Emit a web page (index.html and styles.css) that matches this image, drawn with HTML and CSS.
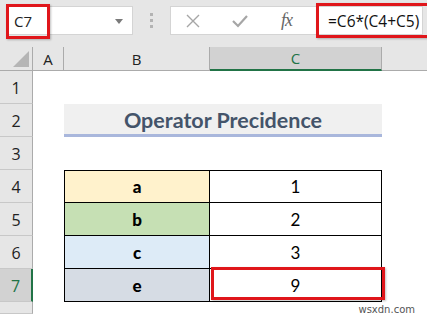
FILE: index.html
```html
<!DOCTYPE html>
<html>
<head>
<meta charset="utf-8">
<link rel="stylesheet" href="styles.css">
</head>
<body>
<div class="app">
  <div class="fbar">
    <div class="namebox">
      <span class="nb-text">C7</span>
      <svg class="nb-arrow" width="8" height="5" viewBox="0 0 8 5"><path d="M0 0H8L4 5Z" fill="#7a7a7a"/></svg>
      <span class="hl hl-name"></span>
    </div>
    <div class="dots"><i></i><i></i><i></i></div>
    <div class="fbox">
      <svg class="ic ic-x" width="16" height="16" viewBox="0 0 16 16"><path d="M2 2L14 14M14 2L2 14" stroke="#a6a6a6" stroke-width="1.4" fill="none"/></svg>
      <svg class="ic ic-check" width="18" height="14" viewBox="0 0 18 14"><path d="M2 7L7 12L16 2" stroke="#a6a6a6" stroke-width="2.2" fill="none"/></svg>
      <span class="fx">fx</span>
      <div class="formula">=C6*(C4+C5)<span class="hl hl-formula"></span></div>
    </div>
  </div>
  <div class="sheet">
    <div class="ch corner"><svg width="16" height="16" viewBox="0 0 16 16"><path d="M16 0V16H0Z" fill="#b5b5b5"/></svg></div>
    <div class="ch">A</div>
    <div class="ch">B</div>
    <div class="ch ch-sel">C</div>
    <div class="ch ch-rest"></div>

    <div class="rh">1</div><div class="row-fill"></div>
    <div class="rh">2</div><div class="cell-a"></div><div class="title">Operator Precidence</div><div class="cell-rest"></div>
    <div class="rh">3</div><div class="row-fill"></div>
    <div class="rh">4</div><div class="cell-a"></div><div class="tb tb-key k-a">a</div><div class="tb tb-val">1</div><div class="cell-rest"></div>
    <div class="rh">5</div><div class="cell-a"></div><div class="tb tb-key k-b">b</div><div class="tb tb-val">2</div><div class="cell-rest"></div>
    <div class="rh">6</div><div class="cell-a"></div><div class="tb tb-key k-c">c</div><div class="tb tb-val">3</div><div class="cell-rest"></div>
    <div class="rh rh-sel">7</div><div class="cell-a"></div><div class="tb tb-key k-e">e</div><div class="tb tb-val tb-sel">9<span class="hl hl-cell"></span></div><div class="cell-rest"></div>
    <div class="rh"></div><div class="row-fill"><span class="wm">wsxdn.com</span></div>
  </div>
</div>
</body>
</html>
```

FILE: styles.css
```css
* { box-sizing: border-box; }
html, body { margin: 0; padding: 0; }
body { width: 427px; height: 314px; overflow: hidden; background: #fff; font-family: "Open Sans", "Liberation Sans", sans-serif; }
.app { width: 427px; height: 314px; display: flex; flex-direction: column; }

.fbar { height: 47px; background: #e6e6e6; display: flex; align-items: flex-start; padding: 6px 4px 0 8px; flex: none; }
.namebox { position: relative; width: 125px; height: 29px; background: #fff; border: 1px solid #d4d4d4; display: flex; align-items: center; justify-content: space-between; padding: 0 9px 0 5px; }
.nb-text { font-size: 15px; color: #222; }
.nb-arrow { margin-top: 1px; }
.hl { position: absolute; border: 3px solid #e0161b; box-shadow: 1px 1px 2px rgba(0,0,0,0.25); pointer-events: none; }
.hl-name { left: -3px; top: -3px; width: 44px; height: 35px; }
.dots { width: 37px; height: 29px; display: flex; flex-direction: column; align-items: center; justify-content: center; gap: 3px; }
.dots i { display: block; width: 3px; height: 3px; background: #b3b3b3; }
.fbox { position: relative; flex: 1; height: 29px; background: #fff; border: 1px solid #d4d4d4; display: flex; align-items: center; padding-left: 14px; }
.ic-x { margin-right: 30px; }
.ic-check { margin-right: 30px; }
.fx { font-family: "Liberation Serif", serif; font-style: italic; font-size: 18px; color: #666; letter-spacing: -1px; width: 24px; padding-left: 2px; }
.formula { position: relative; margin-left: 13px; height: 100%; display: flex; align-items: center; padding-left: 12px; font-size: 15.5px; color: #111; font-family: "Open Sans", sans-serif; }
.hl-formula { left: 0; top: -4px; width: 115px; height: 35px; }

.sheet { flex: 1; display: grid; grid-template-columns: 33px 31px 146px 172px 1fr; grid-template-rows: 24px repeat(7, 33px) 1fr; }
.ch { background: #e6e6e6; border-right: 1px solid #ababab; border-bottom: 1px solid #ababab; display: flex; align-items: center; justify-content: center; font-size: 15px; color: #222; }
.corner { justify-content: flex-end; align-items: flex-end; padding: 0 3px 3px 0; }
.ch-sel { background: #d2d2d2; color: #217346; border-bottom: 2px solid #217346; }
.ch-rest { border-right: none; background: #e6e6e6; }
.rh { background: #e6e6e6; border-right: 1px solid #ababab; border-bottom: 1px solid #c8c8c8; display: flex; align-items: center; justify-content: center; font-size: 16px; color: #222; padding-top: 2px; }
.rh-sel { background: #d2d2d2; color: #217346; border-right: 2px solid #217346; }
.row-fill { grid-column: 2 / 6; position: relative; }
.title { grid-column: 3 / 5; background: #f0f0f0; border-bottom: 3px solid #a9b7dc; display: flex; align-items: center; justify-content: center; font-family: "Lato", sans-serif; font-weight: bold; font-size: 21.5px; color: #44546a; padding-top: 1px; }
.tb { border-right: 1px solid #000; border-bottom: 1px solid #000; display: flex; align-items: center; justify-content: center; font-family: "Lato", sans-serif; font-size: 17px; color: #000; }
.tb-key { border-left: 1px solid #000; font-weight: 900; }
.k-a { background: #fff2cc; border-top: 1px solid #000; }
.k-a + .tb-val { border-top: 1px solid #000; }
.k-b { background: #c6e0b4; }
.k-c { background: #ddebf7; }
.k-e { background: #d6dce4; }
.tb-sel { position: relative; }
.hl-cell { left: 1px; top: -2px; width: 174px; height: 33px; }
.wm { position: absolute; right: 12px; top: 2px; font-family: "DejaVu Sans", sans-serif; font-size: 10px; color: #555; }
```
